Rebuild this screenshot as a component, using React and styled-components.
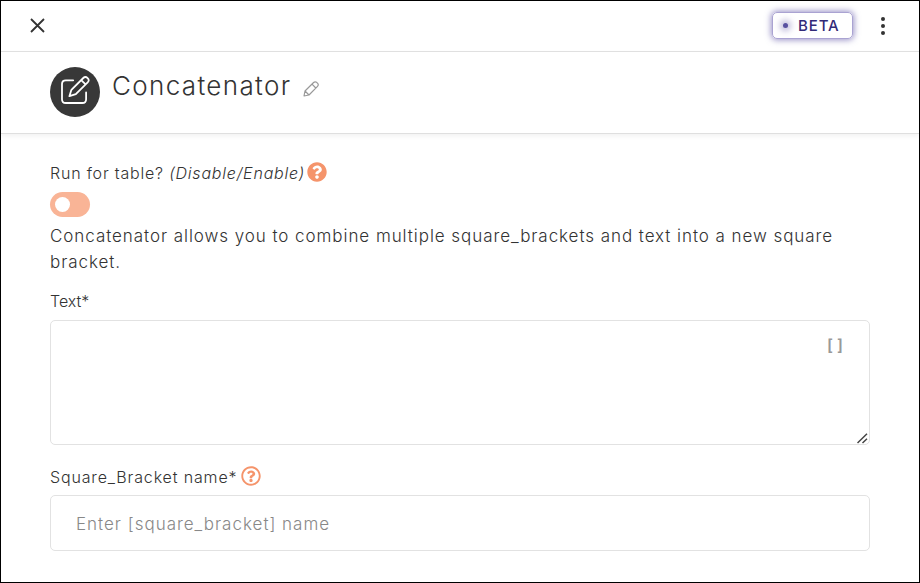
import React from "react";
import styled, { createGlobalStyle } from "styled-components";
import { FaQuestionCircle, FaRegQuestionCircle } from "react-icons/fa";

const App = () => {
  return (
    <>
      <GlobalStyle />
      <Panel>
        <TopBar>
          <IconButton aria-label="Close">
            <svg width="15" height="15" viewBox="0 0 15 15">
              <path d="M1 1L14 14M14 1L1 14" stroke="#333" strokeWidth="1.8" />
            </svg>
          </IconButton>
          <TopActions>
            <Beta>
              <span className="dot" />
              <span className="label">BETA</span>
            </Beta>
            <IconButton aria-label="More">
              <svg width="4" height="18" viewBox="0 0 4 18" fill="#333">
                <circle cx="2" cy="2" r="2" />
                <circle cx="2" cy="9" r="2" />
                <circle cx="2" cy="16" r="2" />
              </svg>
            </IconButton>
          </TopActions>
        </TopBar>

        <Header>
          <Avatar>
            <EditIcon />
          </Avatar>
          <Title>Concatenator</Title>
          <PencilIcon />
        </Header>

        <Form>
          <Label $spacing="0.8px" $gap="2px">
            <span>
              Run for table? <em>(Disable/Enable)</em>
            </span>
            <FaQuestionCircle className="help" />
          </Label>
          <Toggle type="button" role="switch" aria-checked="false" />
          <Description>
            Concatenator allows you to combine multiple square_brackets and text
            into a new square bracket.
          </Description>
          <Label as="label" htmlFor="text" $top="14px" $spacing="0">
            <span>Text*</span>
          </Label>
          <TextBox>
            <textarea id="text" />
            <Brackets>[]</Brackets>
            <Grip width="11" height="11" viewBox="0 0 11 11">
              <path d="M0.5 10L10 0.8M5.5 10L10 5.8" />
            </Grip>
          </TextBox>
          <Label as="label" htmlFor="name" $top="20px" $spacing="0.85px">
            <span>Square_Bracket name*</span>
            <FaRegQuestionCircle className="help" />
          </Label>
          <Input id="name" placeholder="Enter [square_bracket] name" />
        </Form>
      </Panel>
    </>
  );
};

const EditIcon = () => (
  <svg width="30" height="30" viewBox="0 0 30 30">
    <g
      fill="none"
      stroke="#fff"
      strokeWidth="1.8"
      strokeLinecap="round"
      strokeLinejoin="round"
    >
      <path d="M13.2 5.3H5.8Q2 5.3 2 9.1V24.2Q2 28 5.8 28H22.3Q26.1 28 26.1 24.2V17.5" />
      <path d="M9.4 21.2L11.4 14.8L23.3 3Q25.4 1 27.6 3.1Q29.8 5.3 27.7 7.3L15.8 19.1ZM21.2 5.1L25.6 9.4" />
    </g>
  </svg>
);

const PencilIcon = () => (
  <Pencil width="16" height="16" viewBox="0 0 16 16">
    <path d="M1 15L2 10L10.6 1.5Q12 0.2 13.6 1.3L14.7 2.4Q15.9 4 14.5 5.4L6 14L1 15ZM2 10L6 14M9 3.2L12.8 7" />
  </Pencil>
);

const GlobalStyle = createGlobalStyle`
  * {
    box-sizing: border-box;
  }

  body {
    margin: 0;
    font-family: Inter, "Open Sans", sans-serif;
    font-weight: 300;
    color: #333;
    background: #fff;
  }
`;

const Panel = styled.main`
  width: 920px;
  height: 583px;
  border: 1px solid #000;
  background: #fff;
  overflow: hidden;
`;

const TopBar = styled.div`
  display: flex;
  align-items: center;
  justify-content: space-between;
  height: 51px;
  padding: 0 34px 2px 29px;
  border-bottom: 1px solid #e2e2e2;
`;

const TopActions = styled.div`
  display: flex;
  align-items: center;
  gap: 28px;
`;

const IconButton = styled.button`
  display: flex;
  padding: 1px 0 0;
  border: none;
  background: none;
  cursor: pointer;
`;

const Beta = styled.div`
  display: flex;
  align-items: center;
  width: 81px;
  height: 27px;
  padding-left: 10px;
  border-radius: 5px;
  border: 1px solid #aaa3d2;
  box-shadow: 0 0 6px 1px rgba(84, 72, 160, 0.6);

  .dot {
    width: 5px;
    height: 5px;
    margin-right: 10px;
    border-radius: 50%;
    background: #5951a0;
    box-shadow: 0 0 6px 3px rgba(89, 81, 160, 0.4);
  }

  .label {
    font-size: 15px;
    font-weight: 500;
    letter-spacing: 0.9px;
    color: #322a78;
  }
`;

const Header = styled.header`
  display: flex;
  align-items: center;
  height: 82px;
  padding: 0 0 2px 49px;
  border-bottom: 1px solid #dfdfdf;
  box-shadow: 0 2px 5px rgba(0, 0, 0, 0.06);
`;

const Avatar = styled.div`
  display: flex;
  align-items: center;
  justify-content: center;
  width: 50px;
  height: 50px;
  padding: 0 1px 4px 0;
  border-radius: 50%;
  background: #383838;
`;

const Title = styled.h1`
  margin: 0 12px 11px;
  font-size: 26px;
  font-weight: 300;
  line-height: 32px;
  letter-spacing: 1.35px;
`;

const Pencil = styled.svg`
  margin-bottom: 6px;
  fill: none;
  stroke: #999;
  stroke-width: 1.2;
  stroke-linejoin: round;
`;

const Form = styled.form`
  display: flex;
  flex-direction: column;
  padding: 27px 49px 0;
`;

const Label = styled.div`
  display: flex;
  align-items: center;
  gap: ${({ $gap }) => $gap || "4px"};
  height: 24px;
  margin-top: ${({ $top }) => $top || 0};
  font-size: 16px;
  letter-spacing: ${({ $spacing }) => $spacing};

  .help {
    width: 20px;
    height: 20px;
    margin-bottom: 3px;
    color: #f5946b;
  }
`;

const Toggle = styled.button`
  width: 40px;
  height: 25px;
  margin-top: 7px;
  padding: 0 5px;
  border: none;
  border-radius: 13px;
  background: #f9b496;
  cursor: pointer;

  &::before {
    content: "";
    display: block;
    width: 15px;
    height: 15px;
    border-radius: 50%;
    background: #fff;
  }
`;

const Description = styled.p`
  margin: 6px 0 0;
  font-size: 17px;
  line-height: 26px;
  letter-spacing: 0.94px;
`;

const TextBox = styled.div`
  position: relative;
  height: 125px;
  margin-top: 7px;

  textarea {
    display: block;
    width: 100%;
    height: 100%;
    padding: 16px 60px 16px 25px;
    border: 1px solid #e2e2e2;
    border-radius: 5px;
    font: inherit;
    resize: none;
    outline: none;
  }
`;

const Brackets = styled.span`
  position: absolute;
  top: 16px;
  right: 27px;
  font-size: 16px;
  font-weight: 600;
  line-height: 18px;
  letter-spacing: 4px;
  margin-right: -4px;
  color: #999;
`;

const Grip = styled.svg`
  position: absolute;
  right: 2px;
  bottom: 1px;
  stroke: #444;
  stroke-width: 1.5;
`;

const Input = styled.input`
  height: 56px;
  margin-top: 6px;
  padding: 2px 25px 0;
  border: 1px solid #e2e2e2;
  border-radius: 5px;
  font-family: inherit;
  font-size: 17px;
  font-weight: 300;
  letter-spacing: 0.99px;
  outline: none;

  &::placeholder {
    color: #888;
  }
`;

export default App;
